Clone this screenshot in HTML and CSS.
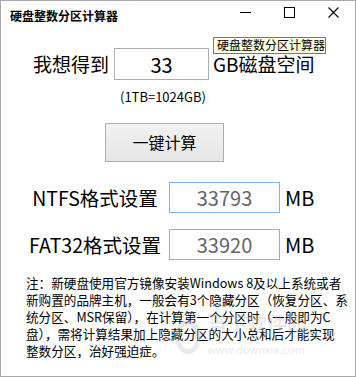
FILE: index.html
```html
<!DOCTYPE html>
<html lang="zh-CN">
<head>
  <meta charset="UTF-8">
  <meta name="viewport" content="width=device-width, initial-scale=1.0">
  <title>硬盘整数分区计算器</title>
  <link rel="stylesheet" href="styles.css">
</head>
<body>
  <div class="win">
    <div class="titlebar">
      <span class="title">硬盘整数分区计算器</span>
      <div class="ctrls">
        <span class="ctrl"><svg width="11" height="11" viewBox="0 0 11 11"><path d="M0 5.5h11" stroke="#000" stroke-width="1"/></svg></span>
        <span class="ctrl"><svg width="11" height="11" viewBox="0 0 11 11"><rect x="0.5" y="0.5" width="10" height="10" fill="none" stroke="#000" stroke-width="1"/></svg></span>
        <span class="ctrl"><svg width="11" height="11" viewBox="0 0 11 11"><path d="M0.5 0.5l10 10M10.5 0.5l-10 10" stroke="#000" stroke-width="1.1"/></svg></span>
      </div>
    </div>
    <div class="tip">硬盘整数分区计算器</div>

    <div class="row want">
      <span class="big">我想得到</span>
      <div class="box gb">33</div>
      <span class="big">GB磁盘空间</span>
    </div>
    <div class="hint">(1TB=1024GB)</div>

    <div class="btnrow">
      <div class="btn">一键计算</div>
    </div>

    <div class="row fs">
      <span class="lbl">NTFS格式设置</span>
      <div class="box res">33793</div>
      <span class="big mb">MB</span>
    </div>
    <div class="row fs">
      <span class="lbl">FAT32格式设置</span>
      <div class="box res">33920</div>
      <span class="big mb">MB</span>
    </div>

    <div class="note">
      <p>注：新硬盘使用官方镜像安装Windows 8及以上系统或者</p>
      <p>新购置的品牌主机，一般会有3个隐藏分区（恢复分区、系</p>
      <p>统分区、MSR保留），在计算第一个分区时（一般即为C</p>
      <p>盘），需将计算结果加上隐藏分区的大小总和后才能实现</p>
      <p>整数分区，治好强迫症。</p>
    </div>

    <div class="mark">
      <span class="logo"></span>
      <span class="mtxt">当下软件园<br><small>www.downxia.com</small></span>
    </div>
  </div>
</body>
</html>
```

FILE: styles.css
```css
*{padding:0;margin:0;box-sizing:border-box}
body{
  background:#fff;
  font-family:"Noto Sans CJK SC","Noto Sans",sans-serif;
  color:#000;
}
.win{
  width:356px;
  height:377px;
  border:1px solid #a9a9a9;
  position:relative;
  background:#fff;
}
.titlebar{
  height:29px;
  display:flex;
  align-items:center;
  justify-content:space-between;
}
.title{
  margin-left:9px;
  font-size:12px;
  font-weight:bold;
  line-height:14px;
}
.ctrls{
  display:flex;
  height:100%;
}
.ctrl{
  width:44px;
  display:flex;
  align-items:center;
  justify-content:center;
  padding-bottom:6px;
}
.tip{
  position:absolute;
  left:212px;
  top:36px;
  width:113px;
  height:17px;
  background:#ffffe1;
  border:1px solid #767676;
  font-size:12px;
  line-height:14px;
  padding-left:3px;
  white-space:nowrap;
  z-index:2;
}
.row{
  display:flex;
  align-items:center;
}
.big{
  font-size:19px;
  line-height:24px;
  white-space:nowrap;
}
.want{
  margin-top:18px;
  padding-left:32px;
}
.want .big:first-child{
  margin-right:5px;
}
.box{
  border:1px solid #adadad;
  display:flex;
  align-items:center;
  justify-content:center;
  font-size:20px;
}
.gb{
  width:95px;
  height:32px;
  margin-right:4px;
}
.hint{
  margin-top:9px;
  padding-left:119px;
  font-size:13px;
  line-height:15px;
}
.btnrow{
  margin-top:19px;
  padding-left:104px;
}
.btn{
  width:119px;
  height:39px;
  border:1px solid #adadad;
  background:linear-gradient(#f2f2f2,#e6e6e6);
  display:flex;
  align-items:center;
  justify-content:center;
  font-size:16px;
  padding-bottom:2px;
}
.fs{
  margin-top:20px;
}
.fs + .fs{
  margin-top:16px;
}
.lbl{
  width:168px;
  text-align:center;
  font-size:19.5px;
  line-height:24px;
  padding-left:20px;
  white-space:nowrap;
}
.res{
  width:111px;
  height:31px;
  border-color:#7eb4ea;
  color:#666;
  margin-right:5px;
}
.mb{
  font-size:20px;
}
.note{
  margin-top:14px;
  padding-left:25px;
  font-size:12.6px;
  line-height:17px;
}
.note p{
  white-space:nowrap;
}
.mark{
  position:absolute;
  left:174px;
  top:312px;
  display:flex;
  align-items:center;
  gap:6px;
  opacity:0.3;
  pointer-events:none;
}
.logo{
  width:26px;
  height:34px;
  border:5px solid #bbb;
  border-radius:50%;
}
.mtxt{
  font-size:20px;
  line-height:22px;
  color:#bbb;
  font-weight:bold;
}
.mtxt small{
  font-size:11px;
  font-weight:normal;
}
```
